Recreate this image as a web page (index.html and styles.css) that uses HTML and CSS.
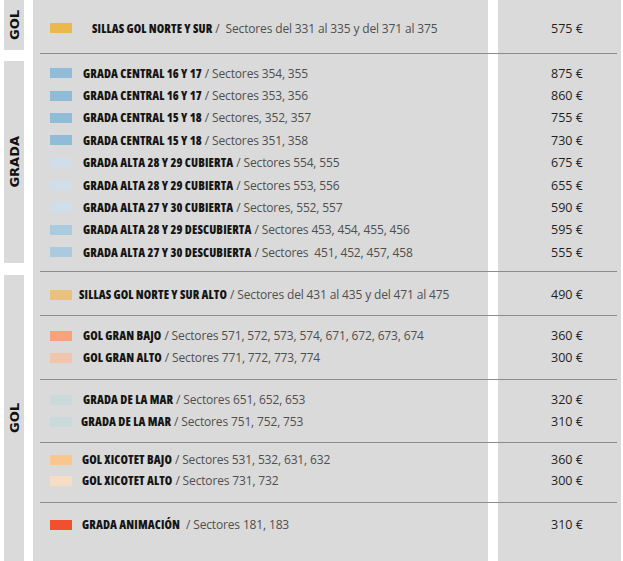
FILE: index.html
```html
<!DOCTYPE html>
<html lang="es">
<head>
<meta charset="utf-8">
<title>Precios abonos</title>
<link rel="stylesheet" href="styles.css">
</head>
<body>
<div class="board">
  <div class="labels">
    <div class="label label-gol1"><span>GOL</span></div>
    <div class="label label-grada"><span>GRADA</span></div>
    <div class="label label-gol2"><span>GOL</span></div>
  </div>
  <div class="table">
    <div class="section s1">
      <div class="row"><div class="desc"><i class="sw c-sillas"></i><span class="tx t-wide"><b>SILLAS GOL NORTE Y SUR</b> / &nbsp;Sectores del 331 al 335 y del 371 al 375</span></div><div class="price">575 €</div></div>
    </div>
    <div class="section s2">
      <div class="row"><div class="desc"><i class="sw c-central"></i><span class="tx"><b>GRADA CENTRAL 16 Y 17</b> / Sectores 354, 355</span></div><div class="price">875 €</div></div>
      <div class="row"><div class="desc"><i class="sw c-central"></i><span class="tx"><b>GRADA CENTRAL 16 Y 17</b> / Sectores 353, 356</span></div><div class="price">860 €</div></div>
      <div class="row"><div class="desc"><i class="sw c-central"></i><span class="tx"><b>GRADA CENTRAL 15 Y 18</b> / Sectores, 352, 357</span></div><div class="price">755 €</div></div>
      <div class="row"><div class="desc"><i class="sw c-central"></i><span class="tx"><b>GRADA CENTRAL 15 Y 18</b> / Sectores 351, 358</span></div><div class="price">730 €</div></div>
      <div class="row"><div class="desc"><i class="sw c-cubierta"></i><span class="tx"><b>GRADA ALTA 28 Y 29 CUBIERTA</b> / Sectores 554, 555</span></div><div class="price">675 €</div></div>
      <div class="row"><div class="desc"><i class="sw c-cubierta"></i><span class="tx"><b>GRADA ALTA 28 Y 29 CUBIERTA</b> / Sectores 553, 556</span></div><div class="price">655 €</div></div>
      <div class="row"><div class="desc"><i class="sw c-cubierta"></i><span class="tx"><b>GRADA ALTA 27 Y 30 CUBIERTA</b> / Sectores, 552, 557</span></div><div class="price">590 €</div></div>
      <div class="row"><div class="desc"><i class="sw c-descubierta"></i><span class="tx"><b>GRADA ALTA 28 Y 29 DESCUBIERTA</b> / Sectores 453, 454, 455, 456</span></div><div class="price">595 €</div></div>
      <div class="row"><div class="desc"><i class="sw c-descubierta"></i><span class="tx"><b>GRADA ALTA 27 Y 30 DESCUBIERTA</b> / Sectores &nbsp;451, 452, 457, 458</span></div><div class="price">555 €</div></div>
    </div>
    <div class="section s3">
      <div class="row"><div class="desc"><i class="sw c-sillas-alto"></i><span class="tx t-narrow"><b>SILLAS GOL NORTE Y SUR ALTO</b> / Sectores del 431 al 435 y del 471 al 475</span></div><div class="price">490 €</div></div>
    </div>
    <div class="section s4">
      <div class="row"><div class="desc"><i class="sw c-gran-bajo"></i><span class="tx"><b>GOL GRAN BAJO</b> / Sectores 571, 572, 573, 574, 671, 672, 673, 674</span></div><div class="price">360 €</div></div>
      <div class="row"><div class="desc"><i class="sw c-gran-alto"></i><span class="tx"><b>GOL GRAN ALTO</b> / Sectores 771, 772, 773, 774</span></div><div class="price">300 €</div></div>
    </div>
    <div class="section s5">
      <div class="row"><div class="desc"><i class="sw c-mar"></i><span class="tx"><b>GRADA DE LA MAR</b> / Sectores 651, 652, 653</span></div><div class="price">320 €</div></div>
      <div class="row"><div class="desc"><i class="sw c-mar"></i><span class="tx t-mid"><b>GRADA DE LA MAR</b> / Sectores 751, 752, 753</span></div><div class="price">310 €</div></div>
    </div>
    <div class="section s6">
      <div class="row"><div class="desc"><i class="sw c-xic-bajo"></i><span class="tx t-mid2"><b>GOL XICOTET BAJO</b> / Sectores 531, 532, 631, 632</span></div><div class="price">360 €</div></div>
      <div class="row"><div class="desc"><i class="sw c-xic-alto"></i><span class="tx t-mid2"><b>GOL XICOTET ALTO</b> / Sectores 731, 732</span></div><div class="price">300 €</div></div>
    </div>
    <div class="section s7">
      <div class="row"><div class="desc"><i class="sw c-animacion"></i><span class="tx t-mid2"><b>GRADA ANIMACIÓN</b> &nbsp;/ Sectores 181, 183</span></div><div class="price">310 €</div></div>
    </div>
  </div>
</div>
</body>
</html>
```
FILE: styles.css
```css
html, body {
  margin: 0;
  padding: 0;
  background: #ffffff;
}

.board {
  display: flex;
  height: 561px;
  width: 623px;
  overflow: hidden;
}

.labels {
  width: 20px;
  margin-left: 4px;
  display: flex;
  flex-direction: column;
}

.label {
  background: #dadada;
  display: flex;
  align-items: center;
  justify-content: center;
}

.label span {
  writing-mode: vertical-rl;
  transform: rotate(180deg);
  font-family: "DejaVu Sans", sans-serif;
  font-weight: bold;
  font-size: 13px;
  color: #111;
  line-height: 1;
}

.label-gol1 { height: 50px; }
.label-grada { height: 202px; margin-top: 11px; }
.label-gol2 { flex: 1; margin-top: 12px; }

.table {
  margin-left: 9px;
  width: 588px;
  height: 561px;
  background: linear-gradient(to right, #dadada 0, #dadada 455px, #ffffff 455px, #ffffff 465px, #dadada 465px);
}

.section {
  margin: 0 4px 0 7px;
  border-bottom: 1px solid #8c8c8c;
}

.s1 { padding: 17px 0 14px; }
.s2 { padding: 8px 0 7.6px; }
.s2 .row { height: 22.375px; }
.s3 { padding: 12px 0 9px; }
.s4 { padding: 9px 0 10px; }
.s5 { padding: 9px 0 9px; }
.s6 { padding: 6.5px 0 10.5px; }
.s6 .row { height: 21px; }
.s7 { padding: 11px 0 0; border-bottom: none; }

.row {
  display: grid;
  grid-template-columns: 458px 1fr;
  height: 22px;
  align-items: center;
}

.desc {
  display: flex;
  align-items: center;
  padding-left: 10px;
  white-space: nowrap;
}

.sw {
  display: block;
  width: 22px;
  height: 10px;
  flex: none;
}

.tx {
  margin-left: 11px;
  font-family: "Open Sans", "Noto Sans", sans-serif;
  font-size: 12px;
  letter-spacing: -0.15px;
  color: #4f4f4f;
}

.tx b {
  font-family: "Open Sans", "DejaVu Sans Condensed", sans-serif;
  font-stretch: 75%;
  font-weight: 800;
  font-size: 12px;
  letter-spacing: 0.12px;
  color: #151515;
}

.t-wide { margin-left: 20px; }
.t-narrow { margin-left: 7px; }
.t-mid { margin-left: 9px; }
.t-mid2 { margin-left: 10px; }

.price {
  padding-left: 53px;
  font-family: "Open Sans", "DejaVu Sans", sans-serif;
  font-weight: 500;
  font-size: 12.5px;
  color: #1f1f1f;
}

.c-sillas { background: #e9b94c; }
.c-central { background: #91bcd7; }
.c-cubierta { background: #cfdee8; }
.c-descubierta { background: #aacadd; }
.c-sillas-alto { background: #eac27c; }
.c-gran-bajo { background: #f7a27b; }
.c-gran-alto { background: #efc6ab; }
.c-mar { background: #cadada; }
.c-xic-bajo { background: #f9c78e; }
.c-xic-alto { background: #f7ddc6; }
.c-animacion { background: #f1502e; }
```
